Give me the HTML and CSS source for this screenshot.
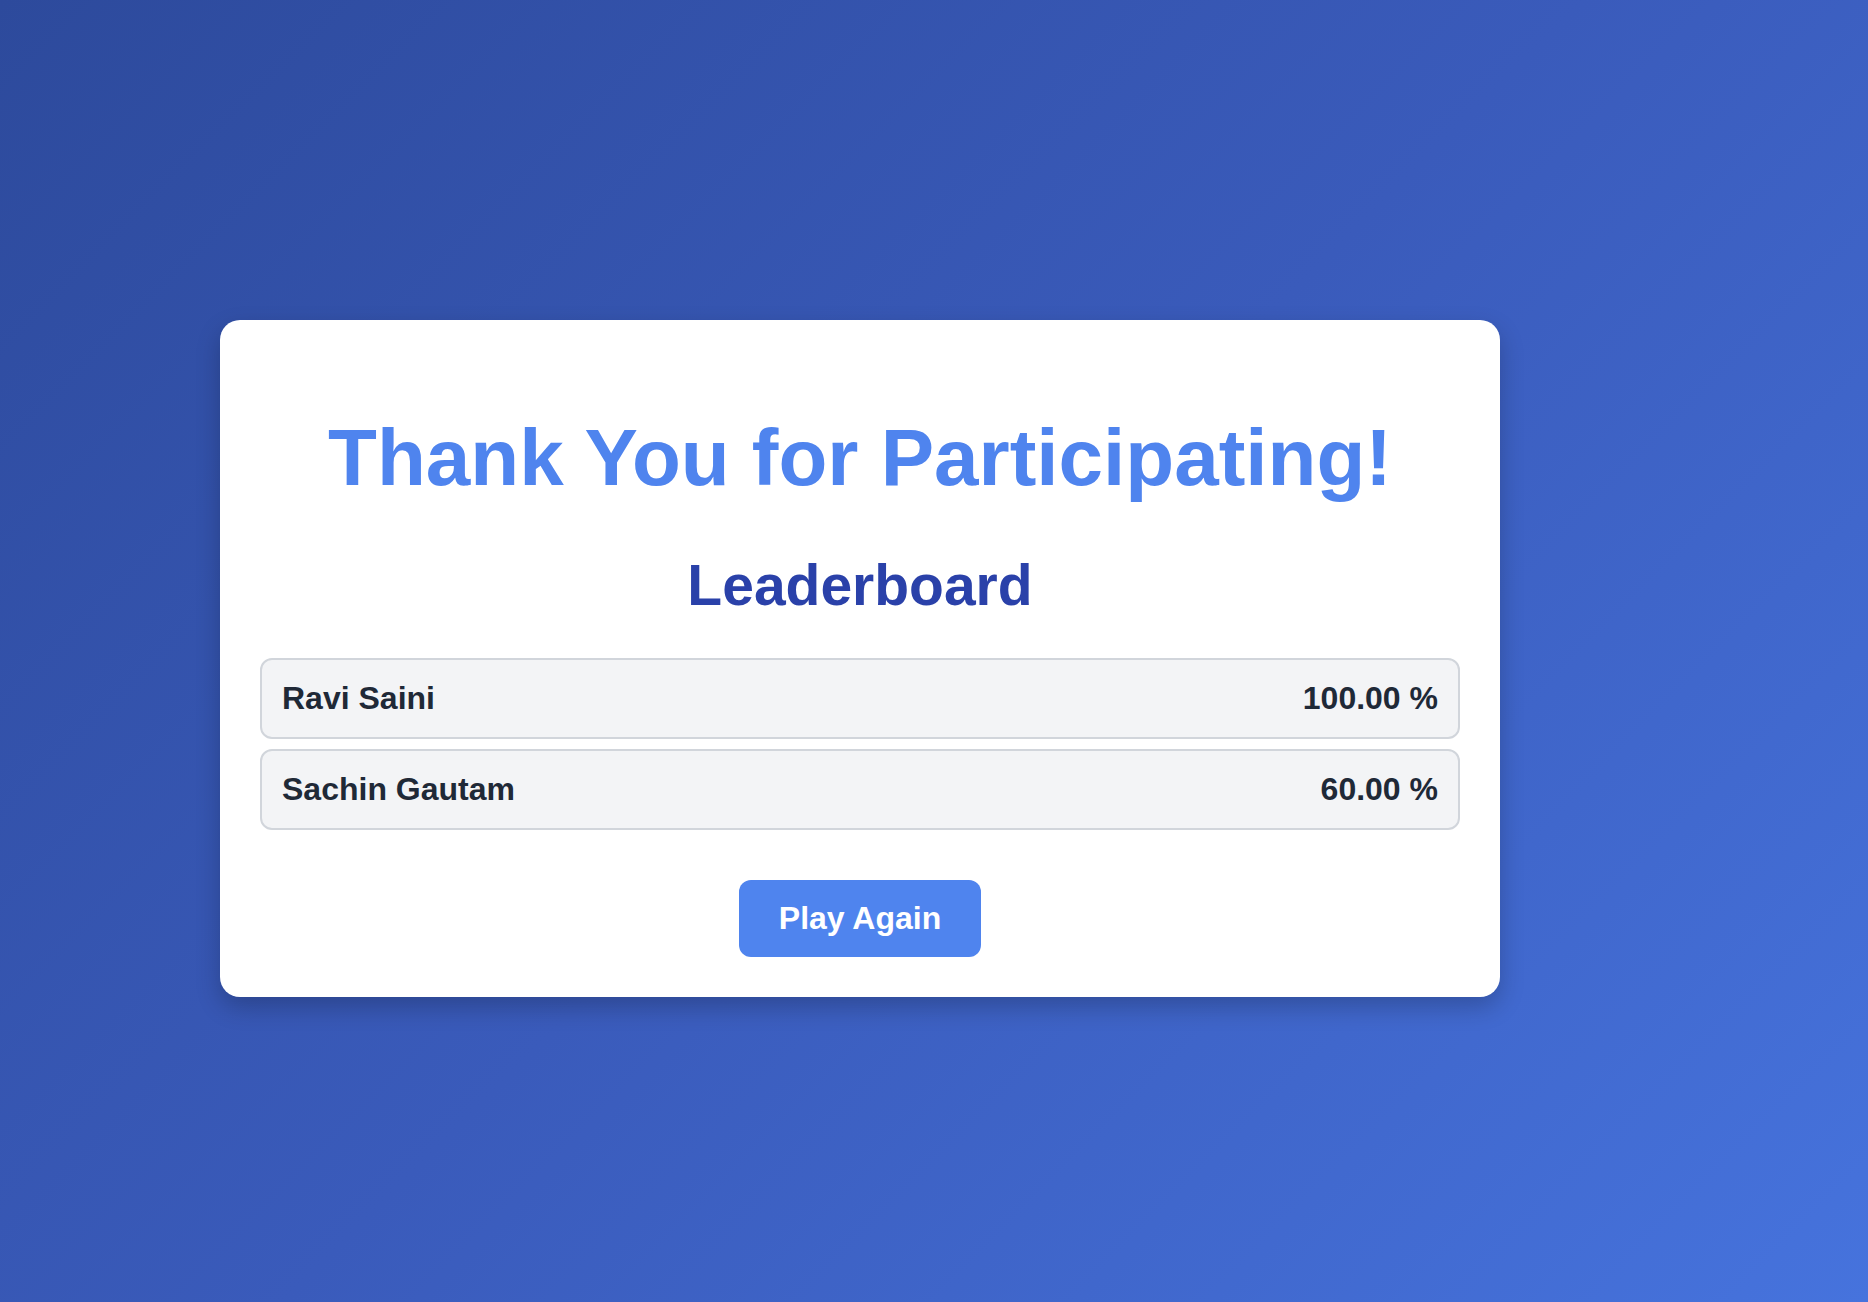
FILE: index.html
```html
<!DOCTYPE html>
<html lang="en">
<head>
<meta charset="UTF-8">
<title>Thank You</title>
<link rel="stylesheet" href="styles.css">
</head>
<body>
  <main class="card">
    <h1 class="title">Thank You for Participating!</h1>
    <h2 class="subtitle">Leaderboard</h2>
    <ul class="board">
      <li class="row"><span class="name">Ravi Saini</span><span class="score">100.00 %</span></li>
      <li class="row"><span class="name">Sachin Gautam</span><span class="score">60.00 %</span></li>
    </ul>
    <div class="actions">
      <button class="btn" type="button">Play Again</button>
    </div>
  </main>
</body>
</html>
```

FILE: styles.css
```css
html, body {
  margin: 0;
  padding: 0;
}
body {
  min-height: 100vh;
  box-sizing: border-box;
  display: flex;
  align-items: center;
  padding: 14px 0 0 220px;
  background: linear-gradient(135deg, #2d4a9c 0%, #3a5bbb 50%, #4673dd 100%);
  font-family: "Liberation Sans", Arial, sans-serif;
}
.card {
  width: 1280px;
  box-sizing: border-box;
  background: #ffffff;
  border-radius: 20px;
  padding: 40px;
  box-shadow: 0 10px 25px rgba(0, 0, 0, 0.22);
  text-align: center;
}
.title {
  margin: 52px 0 0;
  font-size: 80px;
  font-weight: 700;
  color: #4f84ee;
  line-height: normal;
}
.subtitle {
  margin: 48px 0 0;
  font-size: 57px;
  font-weight: 700;
  color: #2a41a9;
  line-height: normal;
}
.board {
  list-style: none;
  margin: 40px 0 0;
  padding: 0;
  display: flex;
  flex-direction: column;
  gap: 10px;
}
.row {
  display: flex;
  justify-content: space-between;
  align-items: center;
  padding: 20px;
  border: 2px solid #d1d5db;
  border-radius: 12px;
  background: #f3f4f6;
  font-size: 32px;
  font-weight: 700;
  color: #1f2937;
  line-height: normal;
}
.actions {
  margin-top: 50px;
  display: flex;
  justify-content: center;
}
.btn {
  font-family: "Liberation Sans", Arial, sans-serif;
  font-size: 32px;
  font-weight: 700;
  line-height: normal;
  color: #ffffff;
  background: #4f84ee;
  border: none;
  border-radius: 12px;
  padding: 20px 40px;
  cursor: pointer;
}
```
